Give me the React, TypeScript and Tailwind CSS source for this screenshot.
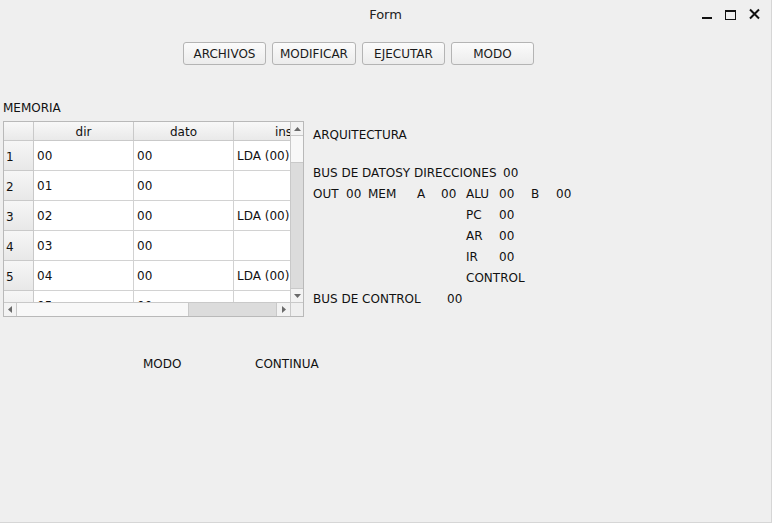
import React from "react";

const rows = [
  { n: "1", dir: "00", dato: "00", ins: "LDA (00)" },
  { n: "2", dir: "01", dato: "00", ins: "" },
  { n: "3", dir: "02", dato: "00", ins: "LDA (00)" },
  { n: "4", dir: "03", dato: "00", ins: "" },
  { n: "5", dir: "04", dato: "00", ins: "LDA (00)" },
  { n: "6", dir: "05", dato: "00", ins: "" },
];

function Btn({ label, wide }: { label: string; wide?: boolean }) {
  return (
    <button
      className={`${wide ? "w-[84px]" : "w-[83px]"} h-[23px] rounded-[3px] border border-[#b4b4b4] bg-gradient-to-b from-[#fbfbfb] to-[#ececec] text-[12px] text-[#1a1a1a] flex items-center justify-center`}
    >
      {label}
    </button>
  );
}

function Tri({ dir }: { dir: "up" | "down" | "left" | "right" }) {
  const pts =
    dir === "up"
      ? "0,4 3.5,0 7,4"
      : dir === "down"
      ? "0,0 3.5,4 7,0"
      : dir === "left"
      ? "4,0 0,3.5 4,7"
      : "0,0 4,3.5 0,7";
  const w = dir === "up" || dir === "down" ? 7 : 4;
  const h = dir === "up" || dir === "down" ? 4 : 7;
  return (
    <svg width={w} height={h} viewBox={`0 0 ${w} ${h}`}>
      <polygon points={pts} fill="#6a6a6a" />
    </svg>
  );
}

function Table() {
  return (
    <div className="w-[301px] h-[196px] border border-[#b9b9b9] bg-[#efefef] flex flex-col">
      <div className="flex h-[180px]">
        <div className="w-[286px] h-[180px] overflow-hidden bg-white">
          <div className="w-[330px]">
            <div className="flex h-[19px]">
              <div className="w-[30px] shrink-0 border-r border-b border-[#c9c9c9] bg-gradient-to-b from-[#f8f8f8] to-[#e9e9e9]" />
              {["dir", "dato", "ins"].map((h) => (
                <div
                  key={h}
                  className="w-[100px] shrink-0 border-r border-b border-[#c9c9c9] bg-gradient-to-b from-[#f8f8f8] to-[#e9e9e9] flex items-center justify-center leading-none pt-[1px]"
                >
                  {h}
                </div>
              ))}
            </div>
            {rows.map((r) => (
              <div key={r.n} className="flex h-[30px]">
                <div className="w-[30px] shrink-0 border-r border-b border-[#c9c9c9] bg-gradient-to-b from-[#f6f6f6] to-[#e8e8e8] flex items-center pl-[2px] pt-[2px]">
                  {r.n}
                </div>
                <div className="w-[100px] shrink-0 border-r border-b border-[#d2d2d2] flex items-center pl-[3px]">
                  {r.dir}
                </div>
                <div className="w-[100px] shrink-0 border-r border-b border-[#d2d2d2] flex items-center pl-[3px]">
                  {r.dato}
                </div>
                <div className="w-[100px] shrink-0 border-r border-b border-[#d2d2d2] flex items-center pl-[3px] whitespace-nowrap">
                  {r.ins}
                </div>
              </div>
            ))}
          </div>
        </div>
        <div className="w-[13px] h-[180px] border-l border-[#c9c9c9] flex flex-col bg-[#dcdcdc]">
          <div className="h-[13px] bg-[#f3f3f3] flex items-center justify-center">
            <Tri dir="up" />
          </div>
          <div className="h-[28px] bg-[#f8f8f8] border-y border-[#c9c9c9]" />
          <div className="flex-1" />
          <div className="h-[14px] bg-[#f3f3f3] border-t border-[#c9c9c9] flex items-center justify-center">
            <Tri dir="down" />
          </div>
        </div>
      </div>
      <div className="flex h-[14px] border-t border-[#c9c9c9]">
        <div className="w-[286px] flex bg-[#dcdcdc]">
          <div className="w-[13px] bg-[#f3f3f3] border-r border-[#c9c9c9] flex items-center justify-center">
            <Tri dir="left" />
          </div>
          <div className="w-[172px] bg-[#f8f8f8] border-r border-[#c9c9c9]" />
          <div className="flex-1" />
          <div className="w-[14px] bg-[#f3f3f3] border-l border-[#c9c9c9] flex items-center justify-center">
            <Tri dir="right" />
          </div>
        </div>
        <div className="w-[13px] border-l border-[#c9c9c9] bg-[#efefef]" />
      </div>
    </div>
  );
}

export default function App() {
  return (
    <div
      className="w-[772px] h-[523px] bg-[#efefef] text-[12px] text-[#111] flex flex-col overflow-hidden border-r border-b border-[#d6d6d6]"
      style={{ fontFamily: '"DejaVu Sans", sans-serif' }}
    >
      {/* Title bar */}
      <div className="relative h-[28px] flex items-center justify-center pt-[2px]">
        <span className="text-[13px] text-[#222]">Form</span>
        <div className="absolute right-[11px] top-[8px] flex items-center gap-[13px]">
          <svg width="10" height="12" viewBox="0 0 10 12">
            <rect x="0" y="9" width="10" height="2" fill="#111" />
          </svg>
          <svg width="11" height="12" viewBox="0 0 11 12">
            <rect x="0.5" y="2.5" width="10" height="9" fill="none" stroke="#111" strokeWidth="1" />
            <rect x="0" y="2" width="11" height="2" fill="#111" />
          </svg>
          <svg width="11" height="12" viewBox="0 0 11 12">
            <path d="M1 1.5 L10 10.5 M10 1.5 L1 10.5" stroke="#111" strokeWidth="2" />
          </svg>
        </div>
      </div>

      {/* Buttons */}
      <div className="mt-[14px] pl-[183px] flex gap-[6px]">
        <Btn label="ARCHIVOS" />
        <Btn label="MODIFICAR" wide />
        <Btn label="EJECUTAR" />
        <Btn label="MODO" />
      </div>

      {/* MEMORIA */}
      <div className="mt-[36px] pl-[3px] h-[15px] leading-[15px]">MEMORIA</div>

      {/* Main */}
      <div className="mt-[5px] pl-[3px] flex">
        <Table />
        <div className="ml-[9px] flex flex-col leading-[21px]">
          <div className="mt-[4px] h-[21px]">ARQUITECTURA</div>
          <div className="mt-[17px] h-[21px] flex">
            <span className="w-[190px]">BUS DE DATOSY DIRECCIONES</span>
            <span>00</span>
          </div>
          <div className="h-[21px] flex whitespace-nowrap">
            <span className="w-[33px]">OUT</span>
            <span className="w-[22px]">00</span>
            <span className="w-[49px]">MEM</span>
            <span className="w-[24px]">A</span>
            <span className="w-[25px]">00</span>
            <span className="w-[33px]">ALU</span>
            <span className="w-[32px]">00</span>
            <span className="w-[25px]">B</span>
            <span>00</span>
          </div>
          {[
            ["PC", "00"],
            ["AR", "00"],
            ["IR", "00"],
          ].map(([a, b]) => (
            <div key={a} className="h-[21px] flex pl-[153px]">
              <span className="w-[33px]">{a}</span>
              <span>{b}</span>
            </div>
          ))}
          <div className="h-[21px] pl-[153px]">CONTROL</div>
          <div className="h-[21px] flex">
            <span className="w-[134px]">BUS DE CONTROL</span>
            <span>00</span>
          </div>
        </div>
      </div>

      {/* Bottom labels */}
      <div className="mt-[40px] flex h-[15px] leading-[15px]">
        <span className="ml-[143px] w-[112px]">MODO</span>
        <span>CONTINUA</span>
      </div>
    </div>
  );
}
